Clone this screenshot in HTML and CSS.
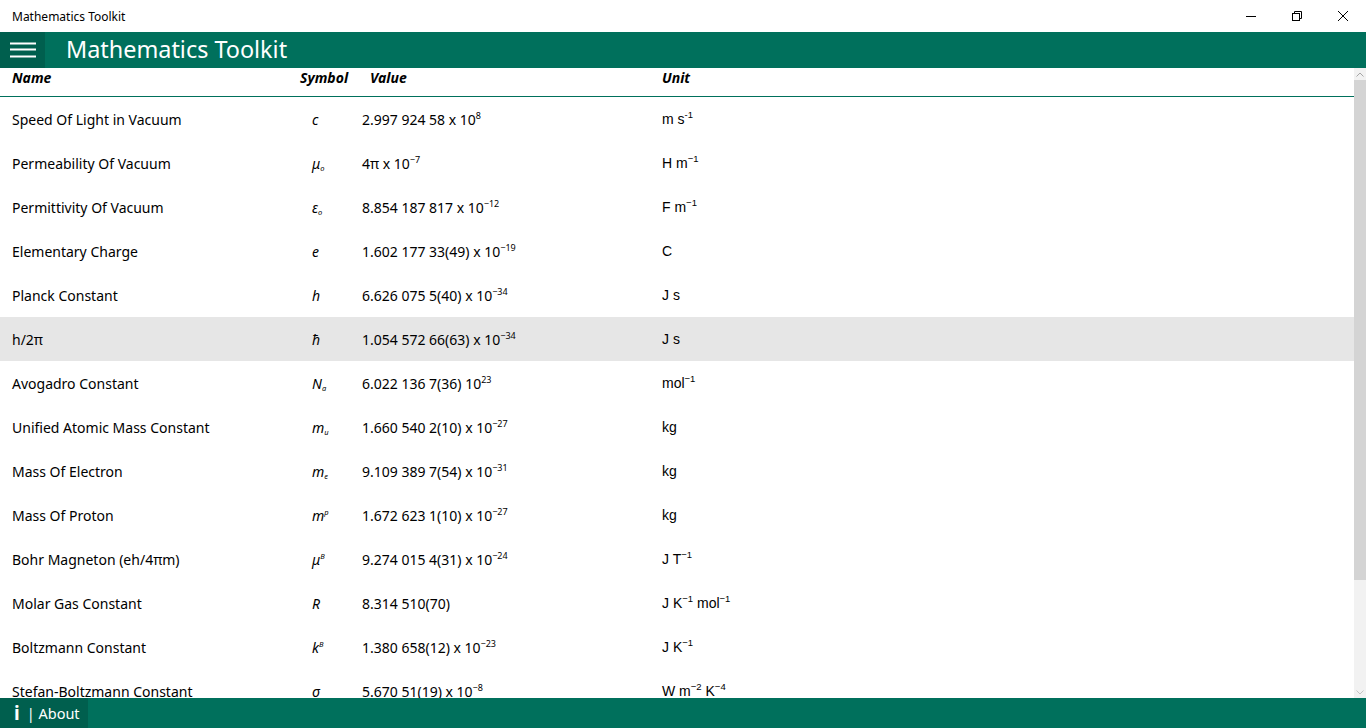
FILE: index.html
```html
<!DOCTYPE html>
<html lang="en">

<head>
    <meta charset="UTF-8">
    <meta name="viewport" content="width=device-width, initial-scale=1.0">
    <title>Mathematics Toolkit</title>
    <link rel="stylesheet" href="styles.css">
</head>

<body>
    <div class="titlebar">
        <span class="titlebar-text">Mathematics Toolkit</span>
        <div class="win-controls">
            <span class="win-btn">
                <svg width="12" height="12" viewBox="0 0 12 12"><path d="M1 6.5h10" stroke="#000" stroke-width="1"/></svg>
            </span>
            <span class="win-btn">
                <svg width="12" height="12" viewBox="0 0 12 12" fill="none" stroke="#000" stroke-width="1"><rect x="1.5" y="3.5" width="7" height="7"/><path d="M3.5 3.5v-2h7v7h-2"/></svg>
            </span>
            <span class="win-btn">
                <svg width="12" height="12" viewBox="0 0 12 12"><path d="M1 1l10 10M11 1L1 11" stroke="#000" stroke-width="1"/></svg>
            </span>
        </div>
    </div>

    <header class="appbar">
        <button class="menu-btn">
            <svg width="26" height="16" viewBox="0 0 26 16"><path d="M0 1.5h26M0 7.5h26M0 14.5h26" stroke="#fff" stroke-width="2"/></svg>
        </button>
        <h1 class="app-title">Mathematics Toolkit</h1>
    </header>

    <main class="content">
        <div class="list">
            <div class="list-head">
                <span>Name</span>
                <span>Symbol</span>
                <span>Value</span>
                <span>Unit</span>
            </div>

            <div class="row">
                <span>Speed Of Light in Vacuum</span>
                <span class="sym">c</span>
                <span>2.997 924 58 x 10<sup>8</sup></span>
                <span class="unit">m s<sup>-1</sup></span>
            </div>
            <div class="row">
                <span>Permeability Of Vacuum</span>
                <span class="sym">μ<sub>o</sub></span>
                <span>4π x 10<sup>−7</sup></span>
                <span class="unit">H m<sup>−1</sup></span>
            </div>
            <div class="row">
                <span>Permittivity Of Vacuum</span>
                <span class="sym">ε<sub>o</sub></span>
                <span>8.854 187 817 x 10<sup>−12</sup></span>
                <span class="unit">F m<sup>−1</sup></span>
            </div>
            <div class="row">
                <span>Elementary Charge</span>
                <span class="sym">e</span>
                <span>1.602 177 33(49) x 10<sup>−19</sup></span>
                <span class="unit">C</span>
            </div>
            <div class="row">
                <span>Planck Constant</span>
                <span class="sym">h</span>
                <span>6.626 075 5(40) x 10<sup>−34</sup></span>
                <span class="unit">J s</span>
            </div>
            <div class="row selected">
                <span>h/2π</span>
                <span class="sym">ħ</span>
                <span>1.054 572 66(63) x 10<sup>−34</sup></span>
                <span class="unit">J s</span>
            </div>
            <div class="row">
                <span>Avogadro Constant</span>
                <span class="sym">N<sub>a</sub></span>
                <span>6.022 136 7(36) 10<sup>23</sup></span>
                <span class="unit">mol<sup>−1</sup></span>
            </div>
            <div class="row">
                <span>Unified Atomic Mass Constant</span>
                <span class="sym">m<sub>u</sub></span>
                <span>1.660 540 2(10) x 10<sup>−27</sup></span>
                <span class="unit">kg</span>
            </div>
            <div class="row">
                <span>Mass Of Electron</span>
                <span class="sym">m<sub>e</sub></span>
                <span>9.109 389 7(54) x 10<sup>−31</sup></span>
                <span class="unit">kg</span>
            </div>
            <div class="row">
                <span>Mass Of Proton</span>
                <span class="sym">m<sup>p</sup></span>
                <span>1.672 623 1(10) x 10<sup>−27</sup></span>
                <span class="unit">kg</span>
            </div>
            <div class="row">
                <span>Bohr Magneton (eh/4πm)</span>
                <span class="sym">μ<sup>B</sup></span>
                <span>9.274 015 4(31) x 10<sup>−24</sup></span>
                <span class="unit">J T<sup>−1</sup></span>
            </div>
            <div class="row">
                <span>Molar Gas Constant</span>
                <span class="sym">R</span>
                <span>8.314 510(70)</span>
                <span class="unit">J K<sup>−1</sup> mol<sup>−1</sup></span>
            </div>
            <div class="row">
                <span>Boltzmann Constant</span>
                <span class="sym">k<sup>B</sup></span>
                <span>1.380 658(12) x 10<sup>−23</sup></span>
                <span class="unit">J K<sup>−1</sup></span>
            </div>
            <div class="row">
                <span>Stefan-Boltzmann Constant</span>
                <span class="sym">σ</span>
                <span>5.670 51(19) x 10<sup>−8</sup></span>
                <span class="unit">W m<sup>−2</sup> K<sup>−4</sup></span>
            </div>
        </div>

        <div class="scrollbar">
            <span class="arrow">
                <svg width="8" height="5" viewBox="0 0 8 5"><path d="M0.5 4.5l3.5-3.5 3.5 3.5" fill="none" stroke="#a6a6a6"/></svg>
            </span>
            <span class="thumb"></span>
            <span class="track"></span>
            <span class="arrow">
                <svg width="8" height="5" viewBox="0 0 8 5"><path d="M0.5 0.5l3.5 3.5 3.5-3.5" fill="none" stroke="#c4c4c4"/></svg>
            </span>
        </div>
    </main>

    <footer class="bottombar">
        <button class="about-btn"><b class="info">i</b><span>| About</span></button>
    </footer>
</body>

</html>
```

FILE: styles.css
```css
*,
*::before,
*::after {
    box-sizing: border-box;
}

html,
body {
    margin: 0;
    height: 100%;
}

body {
    display: flex;
    flex-direction: column;
    overflow: hidden;
    background: #fff;
    color: #000;
    font-family: "Noto Sans", "Open Sans", sans-serif;
}

.titlebar {
    height: 32px;
    flex: none;
    display: flex;
    align-items: center;
    justify-content: space-between;
    padding-left: 12px;
    font-size: 12px;
}

.win-controls {
    display: flex;
    height: 100%;
}

.win-btn {
    width: 46px;
    height: 100%;
    display: flex;
    align-items: center;
    justify-content: center;
}

.appbar {
    height: 36px;
    flex: none;
    display: flex;
    align-items: center;
    background: #00705c;
}

.menu-btn {
    width: 45px;
    height: 100%;
    border: 0;
    padding: 0;
    display: flex;
    align-items: center;
    justify-content: center;
    background: #005f4e;
}

.app-title {
    margin: 0 0 0 21px;
    font-size: 23.4px;
    font-weight: 400;
    color: #fff;
    line-height: 1;
}

.content {
    flex: 1;
    min-height: 0;
    display: flex;
}

.list {
    flex: 1;
    overflow: hidden;
}

.list-head {
    height: 29px;
    display: grid;
    grid-template-columns: 288px 70px 292px 1fr;
    align-items: center;
    padding: 0 0 10px 12px;
    border-bottom: 1px solid #00705c;
    font-size: 14px;
    font-weight: 700;
    font-style: italic;
    line-height: 19px;
}

.row {
    height: 44px;
    display: grid;
    grid-template-columns: 300px 50px 300px 1fr;
    align-items: center;
    padding-left: 12px;
    font-size: 14px;
    white-space: nowrap;
}

.row.selected {
    background: #e6e6e6;
}

.row sup,
.row sub {
    font-size: 9px;
    line-height: 0;
}

.row sup {
    vertical-align: 6px;
}

.row sub {
    vertical-align: -2px;
}

.sym sub,
.sym sup {
    font-size: 7.5px;
}

.sym {
    font-style: italic;
}

.unit {
    font-family: "Liberation Sans", Arial, sans-serif;
    font-size: 14px;
}

.unit sup {
    font-size: 9.5px;
}

.scrollbar {
    width: 12px;
    flex: none;
    display: flex;
    flex-direction: column;
    background: #f2f2f2;
}

.arrow {
    height: 12px;
    display: flex;
    align-items: center;
    justify-content: center;
}

.thumb {
    height: 500px;
    background: #d4d4d4;
}

.track {
    flex: 1;
}

.bottombar {
    height: 30px;
    flex: none;
    display: flex;
    background: #00705c;
}

.about-btn {
    width: 88px;
    border: 0;
    padding: 0 0 0 14px;
    display: flex;
    align-items: center;
    gap: 7px;
    background: #005f4e;
    color: #fff;
    font-family: "Noto Sans", "Open Sans", sans-serif;
    font-size: 14.5px;
}

.info {
    font-size: 19px;
    font-weight: 700;
}
```
